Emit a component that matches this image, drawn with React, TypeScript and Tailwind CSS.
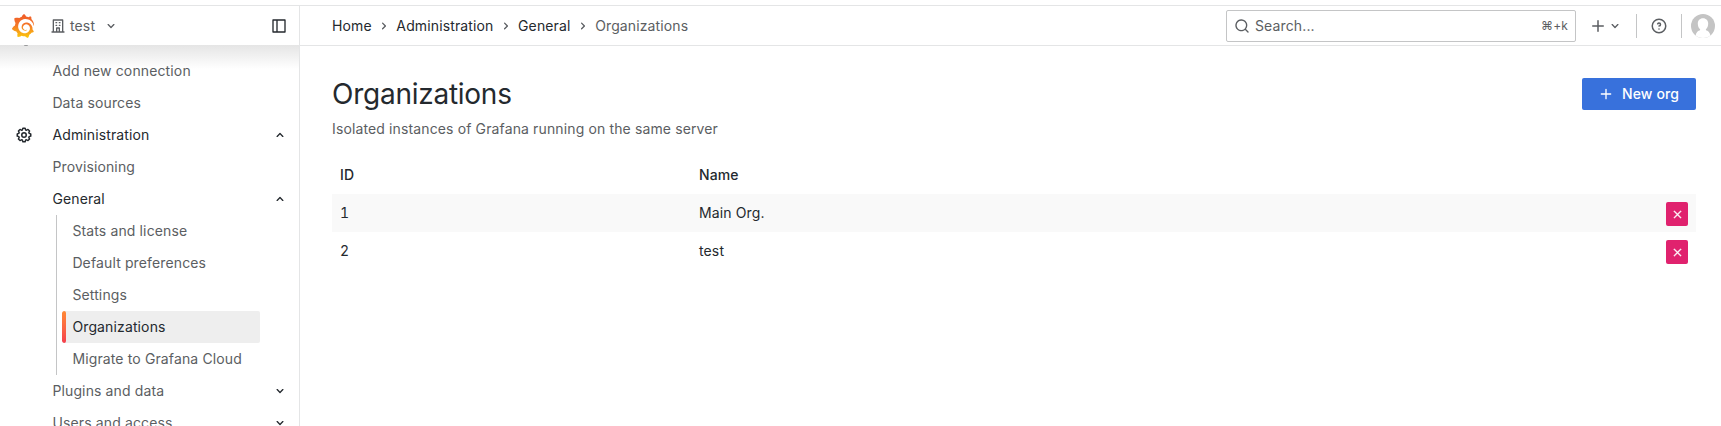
import React from "react";
import { SiGrafana } from "react-icons/si";

const paths = {
  angle:
    "M17,9.17a1,1,0,0,0-1.41,0L12,12.71,8.46,9.17a1,1,0,0,0-1.41,0,1,1,0,0,0,0,1.42l4.24,4.24a1,1,0,0,0,1.42,0L17,10.59A1,1,0,0,0,17,9.17Z",
  search:
    "M21.71,20.29,18,16.61A9,9,0,1,0,16.61,18l3.68,3.68a1,1,0,0,0,1.42,0A1,1,0,0,0,21.71,20.29ZM11,18a7,7,0,1,1,7-7A7,7,0,0,1,11,18Z",
  plus: "M19,11H13V5a1,1,0,0,0-2,0v6H5a1,1,0,0,0,0,2h6v6a1,1,0,0,0,2,0V13h6a1,1,0,0,0,0-2Z",
  help:
    "M11.29,15.29a1.58,1.58,0,0,0-.12.15.76.76,0,0,0-.09.18.64.64,0,0,0-.06.18,1.36,1.36,0,0,0,0,.2.84.84,0,0,0,.08.38.9.9,0,0,0,.54.54.94.94,0,0,0,.76,0,.9.9,0,0,0,.54-.54A1,1,0,0,0,13,16a1,1,0,0,0-.29-.71A1,1,0,0,0,11.29,15.29ZM12,2A10,10,0,1,0,22,12,10,10,0,0,0,12,2Zm0,18a8,8,0,1,1,8-8A8,8,0,0,1,12,20ZM12,7A3,3,0,0,0,9.4,8.5a1,1,0,1,0,1.73,1A1,1,0,0,1,12,9a1,1,0,0,1,0,2,1,1,0,1,0,0,2,3,3,0,0,0,0-6Z",
  times:
    "M13.41,12l6.3-6.29a1,1,0,1,0-1.42-1.42L12,10.59,5.71,4.29A1,1,0,0,0,4.29,5.71L10.59,12l-6.3,6.29a1,1,0,0,0,0,1.42,1,1,0,0,0,1.42,0L12,13.41l6.29,6.3a1,1,0,0,0,1.42,0,1,1,0,0,0,0-1.42Z",
  building:
    "M14,8h1a1,1,0,0,0,0-2H14a1,1,0,0,0,0,2Zm0,4h1a1,1,0,0,0,0-2H14a1,1,0,0,0,0,2ZM9,8h1a1,1,0,0,0,0-2H9A1,1,0,0,0,9,8Zm0,4h1a1,1,0,0,0,0-2H9a1,1,0,0,0,0,2Zm12,8H20V3a1,1,0,0,0-1-1H5A1,1,0,0,0,4,3V20H3a1,1,0,0,0,0,2H21a1,1,0,0,0,0-2Zm-8,0H11V16h2Zm5,0H15V15a1,1,0,0,0-1-1H10a1,1,0,0,0-1,1v5H6V4H18Z",
  cog:
    "M21.32,9.55l-1.89-.63.89-1.78A1,1,0,0,0,20.13,6L18,3.87a1,1,0,0,0-1.15-.19l-1.78.89-.63-1.89A1,1,0,0,0,13.5,2h-3a1,1,0,0,0-.95.68L8.92,4.57,7.14,3.68A1,1,0,0,0,6,3.87L3.87,6a1,1,0,0,0-.19,1.15l.89,1.78-1.89.63A1,1,0,0,0,2,10.5v3a1,1,0,0,0,.68.95l1.89.63-.89,1.78A1,1,0,0,0,3.87,18L6,20.13a1,1,0,0,0,1.15.19l1.78-.89.63,1.89a1,1,0,0,0,.95.68h3a1,1,0,0,0,.95-.68l.63-1.89,1.78.89A1,1,0,0,0,18,20.13L20.13,18a1,1,0,0,0,.19-1.15l-.89-1.78,1.89-.63A1,1,0,0,0,22,13.5v-3A1,1,0,0,0,21.32,9.55ZM20,12.78l-1.2.4A2,2,0,0,0,17.64,16l.57,1.14-1.1,1.1L16,17.64a2,2,0,0,0-2.79,1.16l-.4,1.2H11.22l-.4-1.2A2,2,0,0,0,8,17.64l-1.14.57-1.1-1.1L6.36,16A2,2,0,0,0,5.2,13.18L4,12.78V11.22l1.2-.4A2,2,0,0,0,6.36,8L5.79,6.89l1.1-1.1L8,6.36A2,2,0,0,0,10.82,5.2l.4-1.2h1.56l.4,1.2A2,2,0,0,0,16,6.36l1.14-.57,1.1,1.1L17.64,8a2,2,0,0,0,1.16,2.79l1.2.4ZM12,8a4,4,0,1,0,4,4A4,4,0,0,0,12,8Zm0,6a2,2,0,1,1,2-2A2,2,0,0,1,12,14Z",
  panel:
    "M21,2H3A1,1,0,0,0,2,3V21a1,1,0,0,0,1,1H21a1,1,0,0,0,1-1V3A1,1,0,0,0,21,2ZM8,20H4V4H8Zm12,0H10V4H20Z",
};

function Icon({ name, className = "size-4" }: { name: keyof typeof paths; className?: string }) {
  return (
    <svg viewBox="0 0 24 24" fill="currentColor" className={`shrink-0 ${className}`}>
      <path d={paths[name]} />
    </svg>
  );
}

function Logo() {
  return (
    <>
      <svg className="absolute size-0">
        <defs>
          <linearGradient id="flame" x1="0" y1="0" x2="0" y2="1">
            <stop offset="0" stopColor="#f05a28" />
            <stop offset="0.45" stopColor="#f4772a" />
            <stop offset="1" stopColor="#fbca0a" />
          </linearGradient>
        </defs>
      </svg>
      <SiGrafana className="size-6 shrink-0" style={{ fill: "url(#flame)" }} />
    </>
  );
}

function NavItem({ label, icon, open, strong }: { label: string; icon?: keyof typeof paths; open?: boolean; strong?: boolean }) {
  return (
    <div className={`flex h-8 shrink-0 items-center pr-[11px] ${strong ? "text-[#24292e]" : "text-[#5b5e62]"}`}>
      <div className="flex w-[52.4px] shrink-0 pl-[15px]">{icon && <Icon name={icon} className="size-[18px]" />}</div>
      <span className="flex-1">{label}</span>
      {open !== undefined && <Icon name="angle" className={open ? "size-4 rotate-180 text-[#24292e]" : "size-4 text-[#24292e]"} />}
    </div>
  );
}

const children = ["Stats and license", "Default preferences", "Settings", "Organizations", "Migrate to Grafana Cloud"];
const crumbs = ["Home", "Administration", "General"];
const orgs = [
  { id: 1, name: "Main Org." },
  { id: 2, name: "test" },
];

export default function App() {
  return (
    <div className="flex h-[426px] w-[1721px] flex-col overflow-hidden bg-white pt-[5px] font-['Inter','Liberation_Sans',sans-serif] text-sm tracking-[0.13px] text-[#24292e]">
      <div className="flex min-h-0 flex-1 border-t border-[#e4e5e6]">
        <aside className="flex w-[300px] shrink-0 flex-col border-r border-[#e4e5e6]">
          <div className="flex h-[39px] shrink-0 items-center pl-[11px] pr-3 text-[#5b5e62]">
            <Logo />
            <Icon name="building" className="ml-[15px] size-4" />
            <span className="ml-1">test</span>
            <Icon name="angle" className="ml-2 size-4" />
            <span className="flex-1" />
            <Icon name="panel" className="size-4 text-[#24292e]" />
          </div>
          <nav className="relative flex min-h-0 flex-1 flex-col overflow-hidden pt-[10px]">
            <div className="absolute inset-x-0 top-0 h-6 bg-linear-to-b from-[#e5e5e5] to-white" />
            <div className="absolute left-6 top-0 h-px w-1 rounded-b bg-[#9a9b9d]" />
            <div className="relative flex flex-col">
              <NavItem label="Add new connection" />
              <NavItem label="Data sources" />
              <NavItem label="Administration" icon="cog" open strong />
              <NavItem label="Provisioning" />
              <NavItem label="General" open strong />
              <ul className="ml-14 mr-[39px] flex flex-col border-l border-[#c4c5c6] pl-[5px]">
                {children.map((label) =>
                  label === "Organizations" ? (
                    <li key={label} className="flex h-8 items-center overflow-hidden rounded-xs bg-[#eeeeee]">
                      <span className="h-8 w-1 rounded-xs bg-linear-to-b from-[#ff8833] to-[#f53e4c]" />
                      <span className="pl-[6.4px]">{label}</span>
                    </li>
                  ) : (
                    <li key={label} className="flex h-8 items-center whitespace-nowrap pl-[10.4px] text-[#5b5e62]">
                      {label}
                    </li>
                  ),
                )}
              </ul>
              <NavItem label="Plugins and data" open={false} />
              <NavItem label="Users and access" open={false} />
            </div>
          </nav>
        </aside>

        <div className="flex min-w-0 flex-1 flex-col">
          <header className="flex h-10 shrink-0 items-center border-b border-[#e4e5e6] pl-8 pr-1.5">
            <ol className="flex items-center">
              {crumbs.map((c) => (
                <li key={c} className="flex items-center">
                  {c}
                  <Icon name="angle" className="mx-[4.3px] size-4 -rotate-90 text-[#5b5e62]" />
                </li>
              ))}
              <li className="text-[#5b5e62]">Organizations</li>
            </ol>
            <span className="flex-1" />
            <div className="flex h-8 w-[350px] items-center rounded-xs border border-[#c4c5c6] pl-[7px] pr-[7px] text-[#5b5e62]">
              <Icon name="search" />
              <span className="ml-[5px] flex-1">Search...</span>
              <span className="text-xs">⌘+k</span>
            </div>
            <div className="flex items-center text-[#5b5e62]">
              <Icon name="plus" className="ml-[13px] size-[18px]" />
              <Icon name="angle" />
              <span className="ml-[13px] h-6 w-px bg-[#c4c5c6]" />
              <Icon name="help" className="ml-[13px] size-[18px]" />
              <span className="ml-[13px] h-6 w-px bg-[#c4c5c6]" />
              <svg viewBox="0 0 24 24" className="ml-[9px] size-6">
                <clipPath id="avatar">
                  <circle cx="12" cy="12" r="12" />
                </clipPath>
                <g clipPath="url(#avatar)">
                  <rect width="24" height="24" fill="#c4c4c4" />
                  <path
                    d="M12 4.200c3.200 0 5.200 2.300 5.200 5.200 0 2.500-.9 4.700-2.300 5.900v.9c2 .6 3.900 2 4.400 4.800V24H4.700v-3c.5-2.800 2.400-4.200 4.400-4.800v-.9c-1.400-1.200-2.300-3.400-2.300-5.900 0-2.900 2-5.200 5.200-5.200Z"
                    fill="#fff"
                  />
                </g>
              </svg>
            </div>
          </header>

          <main className="flex flex-col pl-8 pr-[25px] pt-8">
            <div className="flex h-8 items-center justify-between">
              <h1 className="text-[28px] leading-8 tracking-[-0.25px]">Organizations</h1>
              <button className="flex h-8 w-[114px] items-center rounded-xs bg-[#3871dc] pl-4 font-medium text-white">
                <Icon name="plus" />
                <span className="ml-2">New org</span>
              </button>
            </div>
            <p className="mt-2 leading-[22px] text-[#5b5e62]">Isolated instances of Grafana running on the same server</p>
            <table className="mt-4 w-full table-fixed border-collapse">
              <colgroup>
                <col className="w-[359px]" />
                <col />
                <col className="w-[38px]" />
              </colgroup>
              <thead>
                <tr className="h-[38px] text-left">
                  <th className="px-2 font-medium">ID</th>
                  <th className="px-2 font-medium">Name</th>
                  <th />
                </tr>
              </thead>
              <tbody>
                {orgs.map((org) => (
                  <tr key={org.id} className="h-[38px] odd:bg-[#f9f9f9]">
                    <td className="px-2 py-0 tabular-nums">{org.id}</td>
                    <td className="px-2 py-0">{org.name}</td>
                    <td className="px-2 py-0">
                      <button className="mt-0.5 flex h-6 w-[22px] items-center justify-center rounded-xs bg-[#e0226e] text-white">
                        <Icon name="times" className="size-[11px] stroke-current stroke-1" />
                      </button>
                    </td>
                  </tr>
                ))}
              </tbody>
            </table>
          </main>
        </div>
      </div>
    </div>
  );
}
